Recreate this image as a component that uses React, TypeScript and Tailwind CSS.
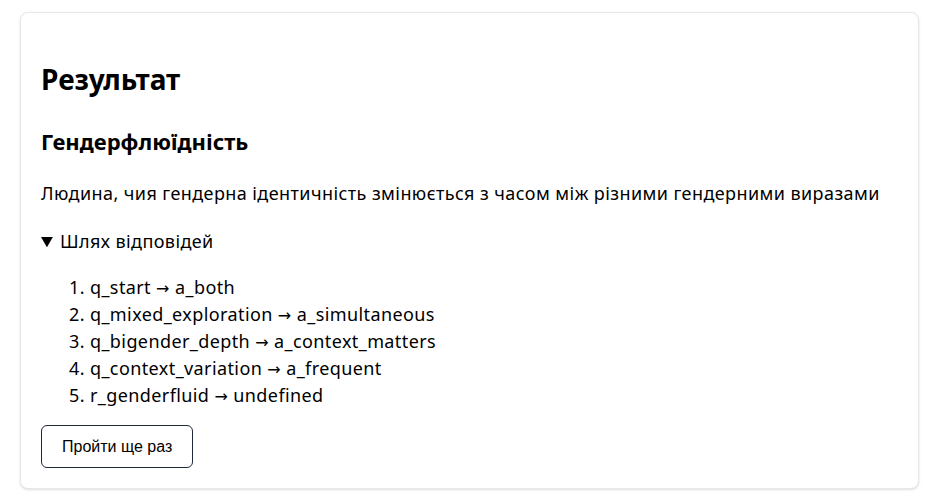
export default function App() {
  const steps = [
    ["q_start", "a_both"],
    ["q_mixed_exploration", "a_simultaneous"],
    ["q_bigender_depth", "a_context_matters"],
    ["q_context_variation", "a_frequent"],
    ["r_genderfluid", "undefined"],
  ];

  return (
    <div className="min-h-screen bg-white pt-3 pl-5 pr-[10px] text-black [font-family:'Noto_Sans',sans-serif]">
      <div className="rounded-lg border border-gray-200 bg-white px-5 pt-5 pb-5 shadow-sm">
        <h2 className="mt-[28px] text-[28px] font-bold leading-[36px]">Результат</h2>
        <h3 className="mt-[30px] text-[22px] font-bold leading-[28px]">Гендерфлюїдність</h3>
        <p className="mt-[25px] text-[18px] leading-[27px] tracking-[0.42px]">
          Людина, чия гендерна ідентичність змінюється з часом між різними гендерними виразами
        </p>
        <details open className="mt-[21px] text-[18px] leading-[27px] tracking-[0.4px]">
          <summary className="cursor-pointer">Шлях відповідей</summary>
          <ol className="mt-[19px] list-decimal pl-[49px]">
            {steps.map(([q, a]) => (
              <li key={q}>
                {q}{" "}
                <span className="text-[16px] leading-[1] [font-family:'DejaVu_Sans',sans-serif]">→</span>{" "}
                {a}
              </li>
            ))}
          </ol>
        </details>
        <button className="mt-[16px] rounded-md border border-gray-800 bg-white px-5 py-[11px] text-[16px] leading-[19px] [font-family:'Liberation_Sans',Arial,sans-serif]">
          Пройти ще раз
        </button>
      </div>
    </div>
  );
}
